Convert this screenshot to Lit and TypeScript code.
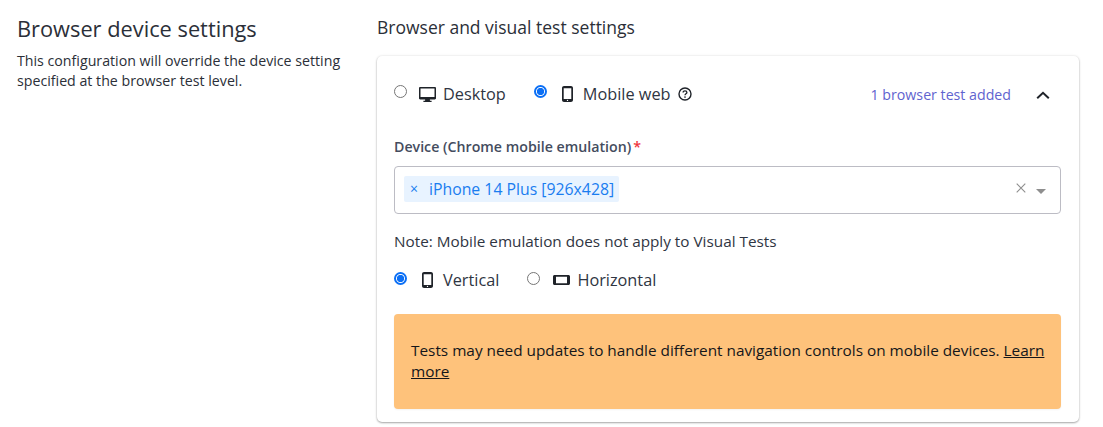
import { LitElement, html, css, svg } from "lit";
import { customElement } from "lit/decorators.js";

const desktop = svg`<path d="M1.200 0h14.600c.7 0 1.200.5 1.200 1.200v10.100c0 .7-.5 1.200-1.200 1.200h-4.900v1.300h1.700V15H4.400v-1.200h1.700v-1.300H1.200C.5 12.500 0 12 0 11.300V1.200C0 .5.500 0 1.200 0zm.3 1.500v8.400h14V1.500z" fill="#1f2329" fill-rule="evenodd"/>`;
const phone = svg`<path d="M2 0h7c1.100 0 2 .9 2 2v12c0 1.100-.9 2-2 2H2c-1.100 0-2-.9-2-2V2C0 .9.900 0 2 0zm-.3 2.300v10.600h7.600V2.300z" fill="#1f2329" fill-rule="evenodd"/><circle cx="5.500" cy="14.400" r=".7" fill="#fff"/>`;

@customElement("app-root")
export class AppRoot extends LitElement {
  static styles = css`
    :host {
      display: block;
      width: 1103px;
      height: 427px;
      background: #fff;
      font-family: "Open Sans", sans-serif;
      color: #2f3542;
      overflow: hidden;
    }
    .page { display: flex; padding: 15px 24px 0 17px; }
    .left { width: 360px; flex: none; }
    .left h2 { margin: 0; font-size: 21.8px; line-height: 27px; font-weight: 400; color: #2b2f38; }
    .left p { margin: 9px 0 0; font-size: 14.2px; line-height: 20px; width: 340px; color: #2b2f38; }
    .right { flex: 1; min-width: 0; }
    .right h3 { margin: 0; font-size: 17.5px; line-height: 24px; font-weight: 400; color: #2b2f38; }
    .card {
      margin-top: 17px;
      height: 366px;
      box-sizing: border-box;
      background: #fff;
      border-radius: 5px;
      box-shadow: 0 1px 2px rgba(0,0,0,.32), 0 0 3px rgba(0,0,0,.1);
      padding: 17px 18px 0 17px;
    }
    .top { display: flex; align-items: center; height: 42px; }
    .radio {
      width: 13px; height: 13px; box-sizing: border-box; border-radius: 50%;
      border: 1px solid #767676; background: #fff; flex: none; margin-top: -6px;
    }
    .orient .radio { margin-top: -4px; }
    .radio.on { border: 2px solid #0b6ff5; background: radial-gradient(circle, #0b6ff5 0 3.4px, #fff 3.9px); }
    .opt { display: flex; align-items: center; font-size: 16.3px; line-height: 24px; color: #2f3542; }
    .ico { flex: none; display: block; }
    .ico.wide { width: 17px; height: 15px; margin: 0 7px 0 12px; }
    .ico.tall { width: 11px; height: 16px; margin: 0 10px 0 15px; }
    .ico.land { width: 17px; height: 10px; margin: 0 7px 0 13px; }
    .opt.second { margin-left: 28px; }
    .help { width: 16px; height: 16px; margin-left: 6px; display: block; }
    .count { margin-left: auto; font-size: 14.2px; color: #5f63cf; }
    .chev { width: 16px; height: 16px; margin: 0 10px 0 24px; display: block; }
    .label { margin-top: 22px; font-size: 14.2px; line-height: 19px; font-weight: 600; color: #444c5e; }
    .label b { color: #f0353b; font-weight: 600; margin-left: 2px; }
    .select {
      margin-top: 10px; height: 48px; box-sizing: border-box;
      border: 1px solid #bcbcc4; border-radius: 4px;
      display: flex; align-items: center; padding: 0 14px 0 9px;
    }
    .tag {
      display: flex; align-items: center; height: 26px; background: #e8f3ff; border-radius: 2px;
      color: #1a7df0; font-size: 15.8px; line-height: 24px; padding: 0 5px 0 6px; margin-top: -2px;
    }
    .tag span { margin-top: -1px; }
    .tag i { font-style: normal; font-size: 14px; width: 19px; }
    .clear { margin-left: auto; width: 10px; height: 10px; margin-top: -4px; display: block; }
    .caret { width: 0; height: 0; margin-left: 10px; border: 5px solid transparent; border-top: 5px solid #8e8e8e; border-bottom: 0; margin-top: 3px; }
    .note { margin-top: 18px; font-size: 15.3px; line-height: 19px; color: #2f3542; }
    .orient { margin-top: 17px; display: flex; align-items: center; height: 24px; }
    .banner {
      margin-top: 22px; height: 95px; box-sizing: border-box; background: #fec27b; border-radius: 4px;
      padding: 26px 16px 0 17px; font-size: 15.35px; line-height: 21px; color: #14161a;
      box-shadow: 0 1px 2px rgba(0,0,0,.05);
    }
    .banner a { color: inherit; text-decoration: underline; }
  `;

  render() {
    return html`<div class="page">
      <div class="left">
        <h2>Browser device settings</h2>
        <p>This configuration will override the device setting specified at the browser test level.</p>
      </div>
      <div class="right">
        <h3>Browser and visual test settings</h3>
        <div class="card">
          <div class="top">
            <div class="opt">
              <div class="radio"></div>
              <svg class="ico wide" viewBox="0 0 17 15">${desktop}</svg>
              <span>Desktop</span>
            </div>
            <div class="opt second">
              <div class="radio on"></div>
              <svg class="ico tall" viewBox="0 0 11 16">${phone}</svg>
              <span>Mobile web</span>
              <svg class="help" viewBox="0 0 16 16">
                <circle cx="8" cy="8" r="6" fill="none" stroke="#1f2329" stroke-width="1.400"/>
                <path d="M6.100 6.500c0-1 .8-1.700 1.900-1.700s1.900.7 1.900 1.600c0 1.300-1.900 1.400-1.900 2.800" fill="none" stroke="#1f2329" stroke-width="1.300"/>
                <circle cx="8" cy="11" r=".85" fill="#1f2329"/>
              </svg>
            </div>
            <span class="count">1 browser test added</span>
            <svg class="chev" viewBox="0 0 16 16"><path d="M2.200 12.300L8 6.800l5.800 5.500" fill="none" stroke="#1f2329" stroke-width="2"/></svg>
          </div>
          <div class="label">Device (Chrome mobile emulation)<b>*</b></div>
          <div class="select">
            <div class="tag"><i>×</i><span>iPhone 14 Plus [926x428]</span></div>
            <svg class="clear" viewBox="0 0 10 10"><path d="M.7.700l8.600 8.600M9.300.700L.7 9.300" stroke="#8e8e8e" stroke-width="1.100" fill="none"/></svg>
            <div class="caret"></div>
          </div>
          <div class="note">Note: Mobile emulation does not apply to Visual Tests</div>
          <div class="orient">
            <div class="opt">
              <div class="radio on"></div>
              <svg class="ico tall" viewBox="0 0 11 16">${phone}</svg>
              <span>Vertical</span>
            </div>
            <div class="opt second">
              <div class="radio"></div>
              <svg class="ico land" viewBox="0 0 17 10"><path d="M1.500 0h14c.8 0 1.500.7 1.500 1.500v7c0 .8-.7 1.500-1.500 1.500h-14C.7 10 0 9.300 0 8.500v-7C0 .7.700 0 1.500 0zm1.500 1.700v6.600h11V1.700z" fill="#1f2329" fill-rule="evenodd"/></svg>
              <span>Horizontal</span>
            </div>
          </div>
          <div class="banner">Tests may need updates to handle different navigation controls on mobile devices. <a href="#">Learn more</a></div>
        </div>
      </div>
    </div>`;
  }
}
